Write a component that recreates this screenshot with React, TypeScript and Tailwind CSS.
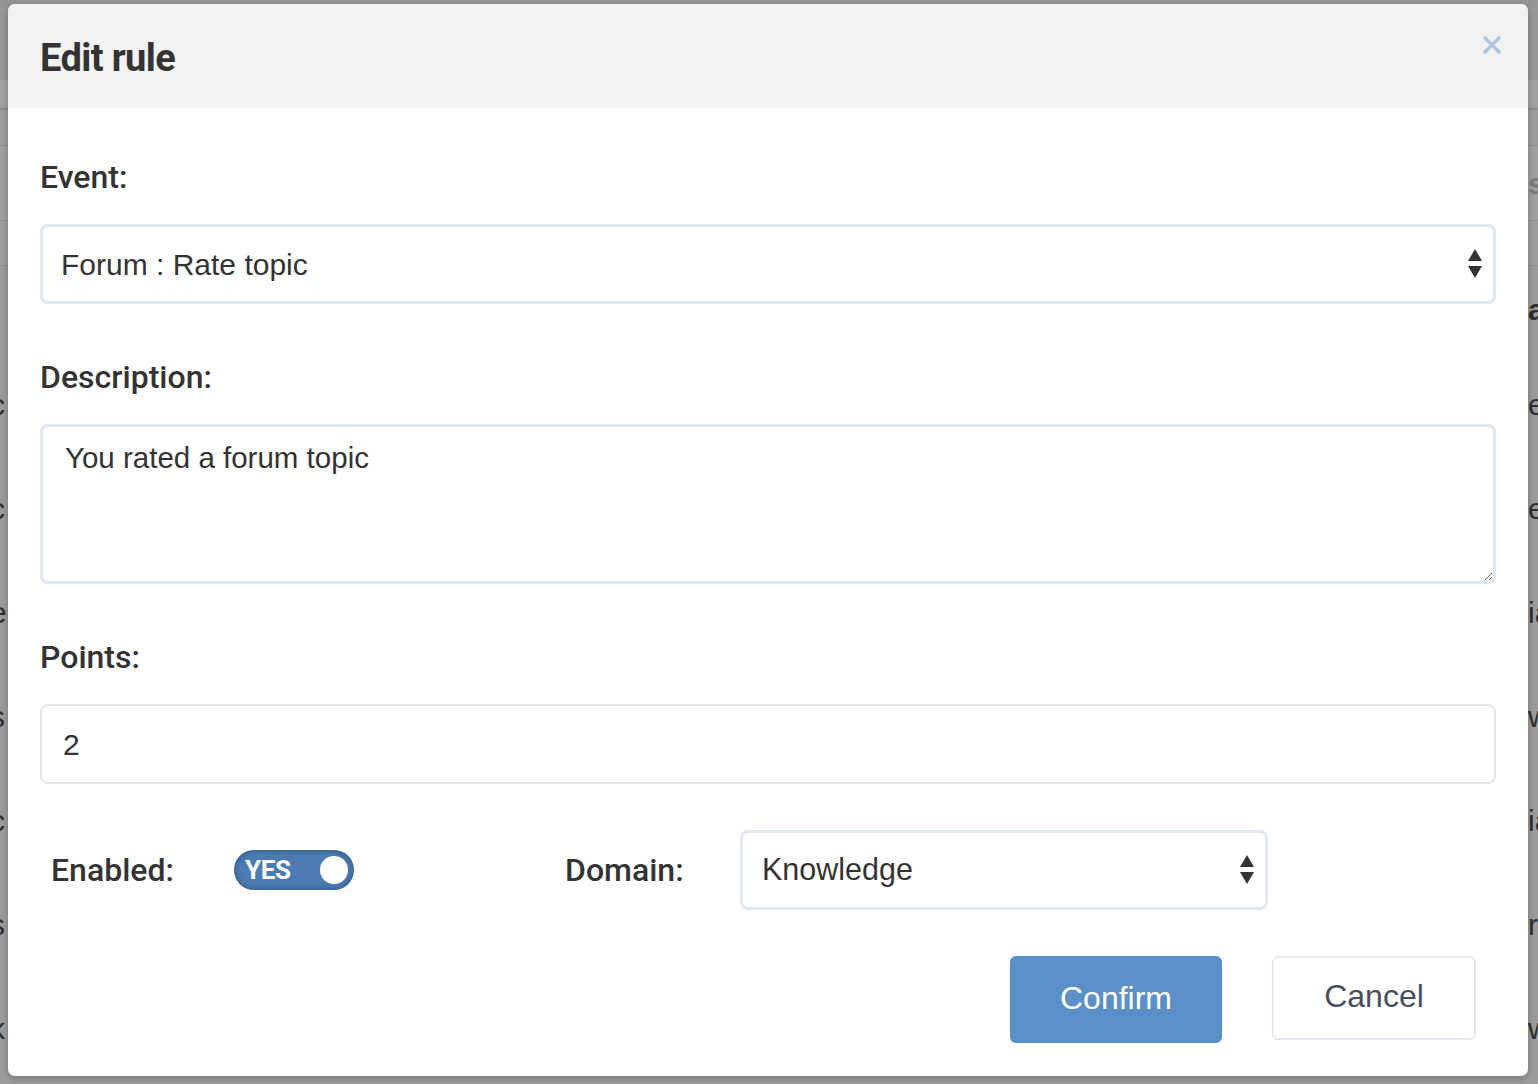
const rows = [
  { left: 'c', right: 'ed' },
  { left: 'c', right: 'ed' },
  { left: 'e', right: 'ia' },
  { left: 's', right: 'w' },
  { left: 'c', right: 'ia' },
  { left: 's', right: 'r' },
  { left: 'k', right: 'w' },
];

function Arrows() {
  return (
    <svg width="16" height="32" viewBox="0 0 16 32" className="shrink-0">
      <path d="M8 1 L15 13 L1 13 Z" fill="#333" />
      <path d="M1 18 L15 18 L8 30 Z" fill="#333" />
    </svg>
  );
}

function Backdrop() {
  return (
    <div className="flex flex-col text-[30px] text-[#2e2e2e] font-['Liberation_Sans',sans-serif]">
      <div className="h-[80px] bg-[#969696]" />
      <div className="h-[30px] bg-[#a1a1a1] border-b-2 border-[#8d8d8d]" />
      <div className="h-[36px] bg-[#9c9c9c] border-b border-[#8f8f8f]" />
      <div className="h-[75px] bg-[#a0a0a0] border-b border-[#8f8f8f] flex items-center justify-end">
        <span className="w-[10px] overflow-hidden whitespace-nowrap text-[#7c7c7c] font-bold">s</span>
      </div>
      <div className="h-[45px] bg-[#9e9e9e] border-b border-[#8f8f8f]" />
      <div className="h-[86px] bg-[#9b9b9b] flex items-center justify-end">
        <span className="w-[10px] overflow-hidden whitespace-nowrap font-bold">a</span>
      </div>
      {rows.map((r, i) => (
        <div key={i} className="h-[104px] bg-[#9b9b9b] flex items-center justify-between">
          <span className="-ml-[10px]">{r.left}</span>
          <span className="w-[10px] overflow-hidden whitespace-nowrap">{r.right}</span>
        </div>
      ))}
    </div>
  );
}

export default function App() {
  return (
    <div className="relative h-[1084px] overflow-hidden bg-[#9b9b9b]">
      <Backdrop />

      <div className="absolute left-[8px] top-[4px] w-[1520px] h-[1072px] bg-white rounded-[7px] overflow-hidden shadow-[0_2px_6px_rgba(0,0,0,0.25)] flex flex-col text-[#333] font-['Roboto',sans-serif]">
        <div className="h-[104px] shrink-0 bg-[#f2f2f2] flex items-center justify-between pl-[32px] pr-[26px]">
          <h1 className="text-[38px] font-bold tracking-[-0.6px] leading-none mt-[4px]">Edit rule</h1>
          <button className="mb-[22px]" aria-label="Close">
            <svg width="20" height="20" viewBox="0 0 20 20">
              <path d="M2 2 L18 18 M18 2 L2 18" stroke="#a9c5e0" strokeWidth="3.2" />
            </svg>
          </button>
        </div>

        <div className="flex flex-col px-[32px] pt-[51px]">
          <label className="text-[32px] font-medium leading-[36px]">Event:</label>
          <div className="mt-[29px] h-[80px] border-[3px] border-[#e1e8ef] rounded-[8px] flex items-center justify-between pl-[18px] pr-[10px] font-['Liberation_Sans',sans-serif] text-[30px]">
            <span>Forum : Rate topic</span>
            <Arrows />
          </div>

          <label className="mt-[55px] text-[32px] font-medium leading-[36px]">Description:</label>
          <textarea
            defaultValue="You rated a forum topic"
            className="mt-[29px] h-[160px] border-[3px] border-[#e1e8ef] rounded-[8px] px-[22px] pt-[14px] font-['Liberation_Sans',sans-serif] text-[29.5px] leading-[34px] text-[#333] outline-none resize"
          />

          <label className="mt-[55px] text-[32px] font-medium leading-[36px]">Points:</label>
          <div className="mt-[29px] h-[80px] border-2 border-[#e4e7ea] rounded-[8px] flex items-center pl-[21px] font-['Liberation_Sans',sans-serif] text-[30px]">
            2
          </div>

          <div className="mt-[46px] h-[80px] flex items-center">
            <span className="ml-[11px] w-[183px] text-[32px] font-medium">Enabled:</span>
            <div className="w-[120px] h-[40px] rounded-full bg-[#4a7bb1] shadow-[inset_0_0_6px_rgba(0,0,0,0.35)] flex items-center justify-between pl-[11px] pr-[6px]">
              <span className="text-white font-bold text-[26px] tracking-[-0.3px] font-['Roboto',sans-serif]">YES</span>
              <span className="w-[28px] h-[28px] rounded-full bg-white" />
            </div>
            <span className="ml-[211px] w-[175px] text-[32px] font-medium">Domain:</span>
            <div className="w-[528px] h-[80px] border-[3px] border-[#e1e8ef] rounded-[8px] flex items-center justify-between pl-[19px] pr-[10px] font-['Liberation_Sans',sans-serif] text-[30.5px]">
              <span>Knowledge</span>
              <Arrows />
            </div>
          </div>

          <div className="mt-[46px] flex items-start justify-end gap-[50px] pr-[20px] font-['Liberation_Sans',sans-serif] text-[32px]">
            <button className="w-[212px] h-[87px] rounded-[6px] bg-[#5b8fc8] text-white pb-[3px]">Confirm</button>
            <button className="w-[204px] h-[84px] rounded-[6px] border-2 border-[#e4e8ee] bg-white text-[#474e5d] pb-[4px]">Cancel</button>
          </div>
        </div>
      </div>
    </div>
  );
}
